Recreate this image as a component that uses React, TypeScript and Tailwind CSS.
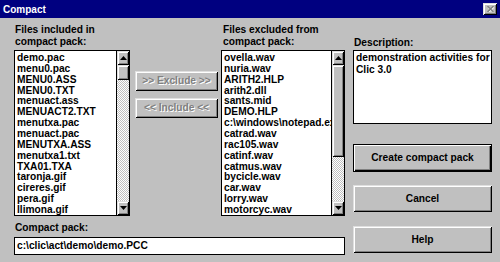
const included = [
  "demo.pac",
  "menu0.pac",
  "MENU0.ASS",
  "MENU0.TXT",
  "menuact.ass",
  "MENUACT2.TXT",
  "menutxa.pac",
  "menuact.pac",
  "MENUTXA.ASS",
  "menutxa1.txt",
  "TXA01.TXA",
  "taronja.gif",
  "cireres.gif",
  "pera.gif",
  "llimona.gif",
];

const excluded = [
  "ovella.wav",
  "nuria.wav",
  "ARITH2.HLP",
  "arith2.dll",
  "sants.mid",
  "DEMO.HLP",
  "c:\\windows\\notepad.exe",
  "catrad.wav",
  "rac105.wav",
  "catinf.wav",
  "catmus.wav",
  "bycicle.wav",
  "car.wav",
  "lorry.wav",
  "motorcyc.wav",
];

const raised =
  "bg-[#c0c0c0] shadow-[inset_1px_1px_0_#dfdfdf,inset_-1px_-1px_0_#000,inset_2px_2px_0_#fff,inset_-2px_-2px_0_#808080]";

function Arrow({ down }: { down?: boolean }) {
  return (
    <div className={`h-[14px] flex items-center justify-center ${raised}`}>
      <svg width="7" height="4" viewBox="0 0 7 4">
        {down ? <polygon points="0,0 7,0 3.5,4" fill="#000" /> : <polygon points="0,4 7,4 3.5,0" fill="#000" />}
      </svg>
    </div>
  );
}

function ScrollBar({ thumb }: { thumb: number }) {
  return (
    <div className="w-[13px] border-l border-black flex flex-col">
      <Arrow />
      <div className={raised} style={{ height: thumb }} />
      <div className="flex-1 bg-[repeating-conic-gradient(#c0c0c0_0_25%,#fff_0_50%)] bg-[length:2px_2px]" />
      <Arrow down />
    </div>
  );
}

function FileList({ items, thumb, width }: { items: string[]; thumb: number; width: string }) {
  return (
    <div className={`${width} h-[166px] border border-black bg-white flex`}>
      <div className="flex-1 overflow-hidden pl-[2px] pt-[2px]">
        {items.map((item, i) => (
          <div key={i} className="h-[10.86px] leading-[10.86px] whitespace-nowrap">
            {item}
          </div>
        ))}
      </div>
      <ScrollBar thumb={thumb} />
    </div>
  );
}

function DisabledButton({ label }: { label: string }) {
  return (
    <div
      className={`h-[20px] w-[83px] flex items-center justify-center text-[#808080] [text-shadow:1px_1px_0_#fff] ${raised}`}
    >
      {label}
    </div>
  );
}

export default function App() {
  return (
    <div className="w-[500px] h-[262px] bg-[#c0c0c0] flex flex-col font-['Liberation_Sans',Arial,sans-serif] font-bold text-[10.2px] text-black overflow-hidden">
      <div className="h-[18px] bg-[#000080] flex items-center justify-between pl-[3px] pr-[3px]">
        <span className="text-white text-[10px]">Compact</span>
        <div className={`w-[14px] h-[12px] flex items-center justify-center ${raised}`}>
          <svg width="7" height="6" viewBox="0 0 7 6">
            <path d="M1 1 L6 6 M6 1 L1 6" stroke="#fff" strokeWidth="1.4" transform="translate(0.6,0.4)" />
            <path d="M0.5 0 L6.5 6 M6.5 0 L0.5 6" stroke="#808080" strokeWidth="1.4" />
          </svg>
        </div>
      </div>

      <div className="flex pl-[14px] pt-[6px]">
        <div className="w-[331px] flex flex-col">
          <div className="flex">
            <div className="flex flex-col">
              <div className="leading-[12px] pl-[1px] h-[24px] mb-[2px]">
                Files included in
                <br />
                compact pack:
              </div>
              <FileList items={included} thumb={15} width="w-[116px]" />
            </div>

            <div className="flex flex-col gap-[7px] ml-[5px] mr-[3px] pt-[47px]">
              <DisabledButton label=">> Exclude >>" />
              <DisabledButton label="<< Include <<" />
            </div>

            <div className="flex flex-col">
              <div className="leading-[12px] pl-[2px] h-[24px] mb-[2px]">
                Files excluded from
                <br />
                compact pack:
              </div>
              <FileList items={excluded} thumb={92} width="w-[124px]" />
            </div>
          </div>

          <div className="leading-[12px] pl-[1px] mt-[6px]">Compact pack:</div>
          <div className="mt-[3px] h-[18px] border border-black bg-white flex items-center pl-[2px]">
            c:\clic\act\demo\demo.PCC
          </div>
        </div>

        <div className="w-[139px] ml-[8px] flex flex-col">
          <div className="leading-[12px] pl-[1px] mt-[13px] mb-[1px]">Description:</div>
          <div className="h-[74px] border border-black bg-white leading-[12px] pl-[2px] pt-[1px]">
            demonstration activities for
            <br />
            Clic 3.0
          </div>
          <div className="mt-[20px] h-[28px] border border-black flex items-center justify-center bg-[#c0c0c0] shadow-[inset_1px_1px_0_#fff,inset_-1px_-1px_0_#000,inset_-2px_-2px_0_#808080]">
            Create compact pack
          </div>
          <div className={`mt-[13px] h-[27px] flex items-center justify-center ${raised}`}>Cancel</div>
          <div className={`mt-[14px] h-[27px] flex items-center justify-center ${raised}`}>Help</div>
        </div>
      </div>
    </div>
  );
}
